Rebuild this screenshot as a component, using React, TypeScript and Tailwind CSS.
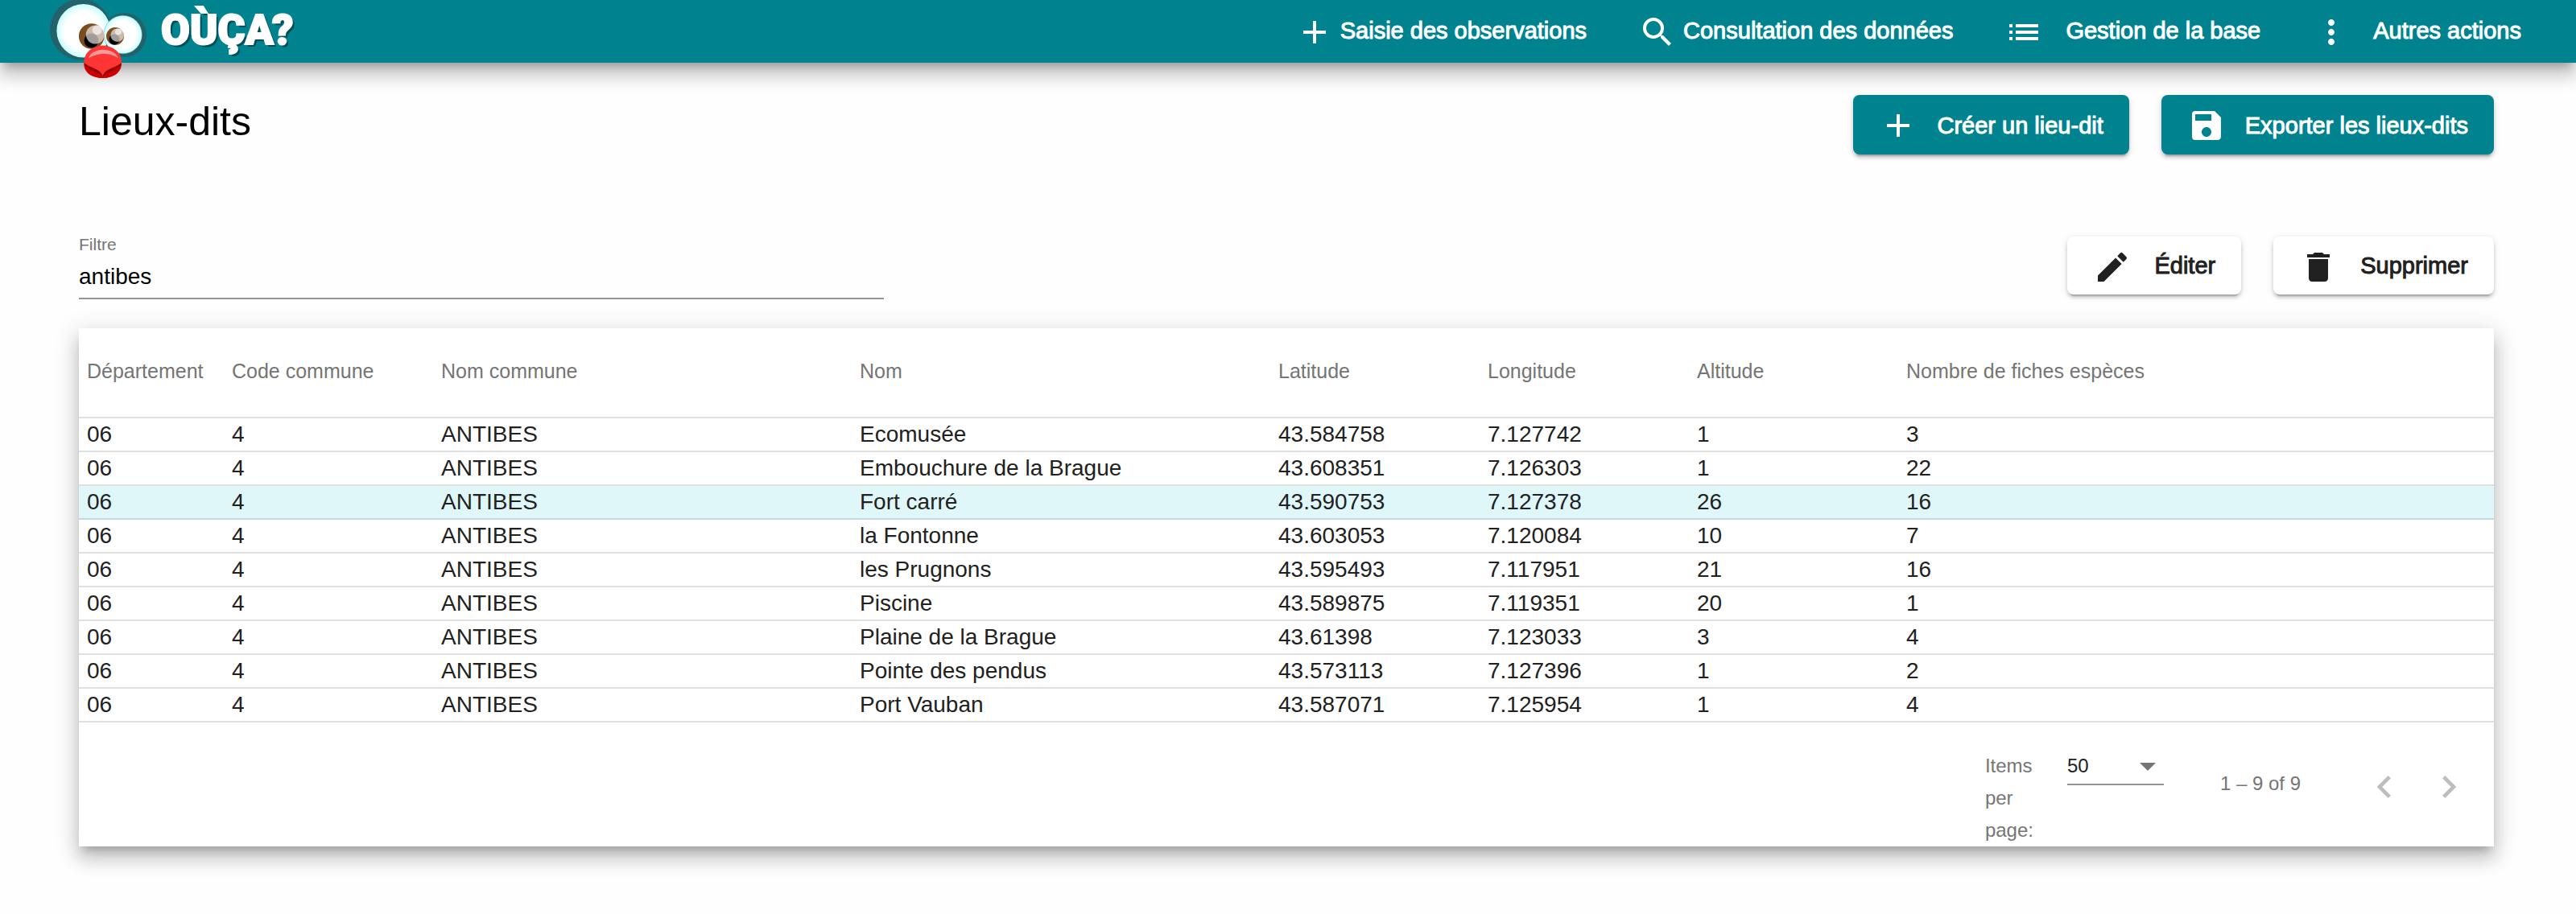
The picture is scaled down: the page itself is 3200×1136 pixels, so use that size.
import React, { useState } from "react";
import { MdAdd, MdChevronLeft, MdChevronRight, MdDelete, MdEdit, MdList, MdMoreVert, MdSave, MdSearch } from "react-icons/md";

const MEDIUM = "text-[29px] leading-10 [-webkit-text-stroke-width:1px]";

const columns = [
  { label: "Département", width: "w-[6%]" },
  { label: "Code commune", width: "w-[calc(100%*13/150)]" },
  { label: "Nom commune", width: "w-[calc(100%*26/150)]" },
  { label: "Nom", width: "w-[calc(100%*26/150)]" },
  { label: "Latitude", width: "w-[calc(100%*13/150)]" },
  { label: "Longitude", width: "w-[calc(100%*13/150)]" },
  { label: "Altitude", width: "w-[calc(100%*13/150)]" },
  { label: "Nombre de fiches espèces", width: "" },
];

const places = [
  ["06", "4", "ANTIBES", "Ecomusée", "43.584758", "7.127742", "1", "3"],
  ["06", "4", "ANTIBES", "Embouchure de la Brague", "43.608351", "7.126303", "1", "22"],
  ["06", "4", "ANTIBES", "Fort carré", "43.590753", "7.127378", "26", "16"],
  ["06", "4", "ANTIBES", "la Fontonne", "43.603053", "7.120084", "10", "7"],
  ["06", "4", "ANTIBES", "les Prugnons", "43.595493", "7.117951", "21", "16"],
  ["06", "4", "ANTIBES", "Piscine", "43.589875", "7.119351", "20", "1"],
  ["06", "4", "ANTIBES", "Plaine de la Brague", "43.61398", "7.123033", "3", "4"],
  ["06", "4", "ANTIBES", "Pointe des pendus", "43.573113", "7.127396", "1", "2"],
  ["06", "4", "ANTIBES", "Port Vauban", "43.587071", "7.125954", "1", "4"],
];

function Mascot() {
  return (
    <svg viewBox="0 0 124 98" className="h-[98px] w-[124px] shrink-0" aria-hidden="true">
      <defs>
        <radialGradient id="eye">
          <stop offset="0.7" stopColor="#ffffff" />
          <stop offset="1" stopColor="#c8ffff" />
        </radialGradient>
      </defs>
      <circle cx="40" cy="36.5" r="38" fill="#24626b" />
      <circle cx="94.5" cy="43.5" r="27.5" fill="#24626b" />
      <circle cx="43.7" cy="38.3" r="33.3" fill="url(#eye)" />
      <circle cx="92.7" cy="43" r="23.7" fill="url(#eye)" stroke="#3c9aa5" strokeWidth="0.4" />
      <circle cx="53.7" cy="45" r="15.8" fill="#7a4d21" />
      <circle cx="53.5" cy="50.5" r="9" fill="#000000" />
      <circle cx="58.3" cy="43" r="11.5" fill="#ffffff" fillOpacity="0.62" />
      <circle cx="60.7" cy="37.3" r="6" fill="#ffffff" fillOpacity="0.6" />
      <circle cx="83" cy="45" r="11" fill="#7a4d21" />
      <circle cx="82" cy="49" r="6.5" fill="#000000" />
      <circle cx="85.7" cy="43.7" r="8.3" fill="#ffffff" fillOpacity="0.62" />
      <circle cx="87" cy="39.5" r="4" fill="#ffffff" fillOpacity="0.6" />
      <ellipse cx="67.7" cy="76.8" rx="23.3" ry="20.2" fill="#ff3434" />
      <path d="M44.4 79C52 86 64 85 67.7 95C71 85 83 86 91 79C91 90 81 97 67.7 97C54 97 44 90 44.4 79Z" fill="#cc0000" />
      <path d="M44.4 78C52 85 65 85 67.7 95C70 85 83 85 91 78C90 86 79 86 67.7 95C57 86 45 86 44.4 78Z" fill="#8f0000" />
      <path d="M50 72.5C54 58 82 58 87 72.5C79 65 60 65 50 72.5Z" fill="#ff9a9a" />
    </svg>
  );
}

type IconType = React.ComponentType<{ className?: string }>;

function NavButton({ icon: Icon, label, wide }: { icon: IconType; label: string; wide?: boolean }) {
  return (
    <button type="button" className={`flex h-[76px] items-center px-8 ${wide ? "gap-7" : "gap-2"}`}>
      <Icon className="mt-1 size-12 shrink-0" />
      <span className={`whitespace-nowrap ${MEDIUM}`}>{label}</span>
    </button>
  );
}

function RaisedButton({ icon: Icon, label, primary }: { icon: IconType; label: string; primary?: boolean }) {
  return (
    <button
      type="button"
      className={`flex items-center rounded-lg px-8 shadow-[0_6px_2px_-4px_rgba(0,0,0,0.2),0_4px_4px_0_rgba(0,0,0,0.14),0_2px_10px_0_rgba(0,0,0,0.12)] ${
        primary ? "h-[74px] gap-6 bg-[#00838f] pt-0.5 text-white" : "h-[72px] gap-7 bg-white"
      }`}
    >
      <Icon className={`size-12 shrink-0 ${primary ? "" : "mt-1"}`} />
      <span className={`whitespace-nowrap ${MEDIUM}`}>{label}</span>
    </button>
  );
}

const RAISED_PANEL =
  "shadow-[0_10px_10px_-6px_rgba(0,0,0,0.2),0_16px_20px_2px_rgba(0,0,0,0.14),0_6px_28px_4px_rgba(0,0,0,0.12)]";

export default function App() {
  const [filter, setFilter] = useState("antibes");
  const [selected, setSelected] = useState(2);

  return (
    <div className="min-h-screen bg-[#fefefe] font-['Liberation_Sans',Arial,sans-serif] text-[28px] leading-10 text-[#212121]">
      <header className={`relative flex h-[78px] items-start justify-between bg-[#00838f] pr-9 pl-[60px] text-white ${RAISED_PANEL}`}>
        <a href="#accueil" className="flex items-start gap-4">
          <Mascot />
          <span className="font-['Roboto',sans-serif] text-[52px] leading-[76px] font-black [-webkit-text-stroke-width:2px] [text-shadow:3px_3px_0_#004f58]">
            OÙÇA?
          </span>
        </a>
        <nav className="flex">
          <NavButton icon={MdAdd} label="Saisie des observations" />
          <NavButton icon={MdSearch} label="Consultation des données" />
          <NavButton icon={MdList} label="Gestion de la base" wide />
          <NavButton icon={MdMoreVert} label="Autres actions" wide />
        </nav>
      </header>

      <main className="pt-10 pr-[102px] pb-20 pl-[98px]">
        <div className="flex items-start justify-between">
          <h1 className="text-[50px] leading-[66px] text-black">Lieux-dits</h1>
          <div className="flex gap-10">
            <RaisedButton icon={MdAdd} label="Créer un lieu-dit" primary />
            <RaisedButton icon={MdSave} label="Exporter les lieux-dits" primary />
          </div>
        </div>

        <div className="mt-24 flex items-start justify-between">
          <div className="flex w-1/3 flex-col border-b-2 border-[#949494]">
            <label htmlFor="filtre" className="text-[21px] leading-8 text-[#757575]">Filtre</label>
            <input
              id="filtre"
              type="text"
              value={filter}
              onChange={(e) => setFilter(e.target.value)}
              className="mb-0.5 h-12 w-full bg-transparent text-black outline-none"
            />
          </div>
          <div className="mt-1.5 flex gap-10">
            <RaisedButton icon={MdEdit} label="Éditer" />
            <RaisedButton icon={MdDelete} label="Supprimer" />
          </div>
        </div>

        <section className={`mt-9 bg-white ${RAISED_PANEL}`}>
          <table className="w-full table-fixed border-separate border-spacing-0 text-left">
            <thead>
              <tr>
                {columns.map((c) => (
                  <th
                    key={c.label}
                    scope="col"
                    className={`h-28 border-b-2 border-black/12 p-0 pb-1 pl-[10px] text-[25px] font-normal whitespace-nowrap text-[#757575] ${c.width}`}
                  >
                    {c.label}
                  </th>
                ))}
              </tr>
            </thead>
            <tbody>
              {places.map((row, i) => (
                <tr key={row[3]} onClick={() => setSelected(i)} className={i === selected ? "bg-[#e0f7fa]" : ""}>
                  {row.map((cell, j) => (
                    <td key={j} className="h-[42px] border-b-2 border-black/12 p-0 pl-[10px] whitespace-nowrap">{cell}</td>
                  ))}
                </tr>
              ))}
            </tbody>
          </table>

          <div className="flex items-start justify-end pt-[34px] pr-4 text-2xl leading-10 text-[#757575]">
            <label htmlFor="page-size" className="mr-[38px] w-16">Items per page:</label>
            <div className="relative w-[120px] border-b-2 border-[#949494]">
              <select id="page-size" defaultValue="50" className="mb-0.5 block h-10 w-full appearance-none bg-transparent text-[#212121] outline-none">
                <option>25</option>
                <option>50</option>
                <option>100</option>
              </select>
              <svg viewBox="0 0 20 10" className="pointer-events-none absolute top-4 right-[10px] h-[10px] w-5 fill-[#757575]" aria-hidden="true">
                <path d="M0 0H20L10 10Z" />
              </svg>
            </div>
            <span className="mt-[22px] ml-[70px]">1 – 9 of 9</span>
            <div className="mt-[6px] ml-16 flex text-[#bdbdbd]">
              <button type="button" aria-label="Page précédente" className="flex size-20 items-center justify-center">
                <MdChevronLeft className="size-14" />
              </button>
              <button type="button" aria-label="Page suivante" className="flex size-20 items-center justify-center">
                <MdChevronRight className="size-14" />
              </button>
            </div>
          </div>
        </section>
      </main>
    </div>
  );
}
